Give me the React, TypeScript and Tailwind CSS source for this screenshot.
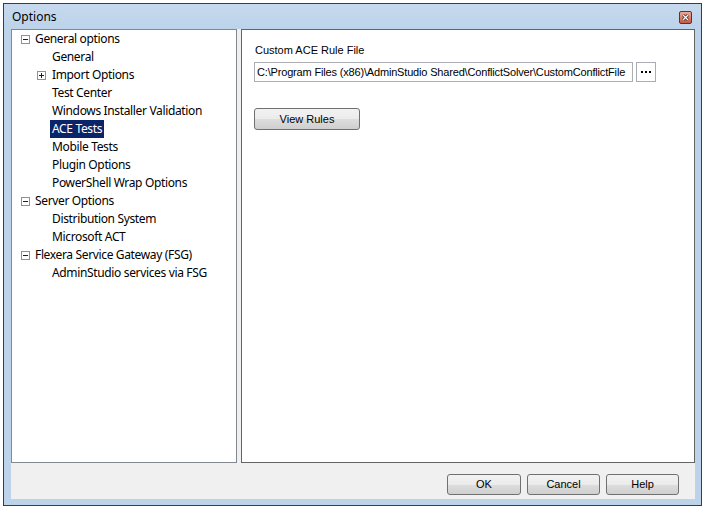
import React from 'react';

const tree = [
  { label: 'General options', level: 0, box: 'minus' },
  { label: 'General', level: 1 },
  { label: 'Import Options', level: 1, box: 'plus' },
  { label: 'Test Center', level: 1 },
  { label: 'Windows Installer Validation', level: 1 },
  { label: 'ACE Tests', level: 1, selected: true },
  { label: 'Mobile Tests', level: 1 },
  { label: 'Plugin Options', level: 1 },
  { label: 'PowerShell Wrap Options', level: 1 },
  { label: 'Server Options', level: 0, box: 'minus' },
  { label: 'Distribution System', level: 1 },
  { label: 'Microsoft ACT', level: 1 },
  { label: 'Flexera Service Gateway (FSG)', level: 0, box: 'minus' },
  { label: 'AdminStudio services via FSG', level: 1 },
];

function Expander({ kind }: { kind: string }) {
  return (
    <span className="relative w-[9px] h-[9px] border border-[#919191] bg-white shrink-0">
      <span className="absolute left-[1px] top-[3px] w-[5px] h-px bg-[#1e1e1e]" />
      {kind === 'plus' && <span className="absolute left-[3px] top-[1px] w-px h-[5px] bg-[#1e1e1e]" />}
    </span>
  );
}

function Btn({ children, className = '' }: { children: React.ReactNode; className?: string }) {
  return (
    <button
      className={`border border-[#707070] rounded-[3px] bg-[linear-gradient(#f2f2f2_0%,#ebebeb_50%,#dddddd_51%,#cfcfcf_100%)] text-[11px] text-black flex items-center justify-center ${className}`}
      style={{ fontFamily: '"Liberation Sans", Arial, sans-serif' }}
    >
      {children}
    </button>
  );
}

export default function App() {
  return (
    <div className="w-[703px] h-[508px] bg-white pl-[3px] pt-[3px]">
      <div className="w-[699px] h-[503px] border border-[#3c3c3c] bg-[#bcd3ea] flex flex-col pl-[7px] pr-[6px] pb-[6px]">
        <div className="h-[25px] flex items-center justify-between shrink-0 -ml-[7px] -mr-[6px] pl-[8px] pr-[9px] bg-[linear-gradient(#c6d9ee,#bcd3ea)]">
          <span className="text-[12px] text-black pt-[1px]" style={{ fontFamily: '"Noto Sans", sans-serif' }}>Options</span>
          <span className="w-[13px] h-[13px] mt-[1px] border border-[#6d2c1e] rounded-[2px] bg-[linear-gradient(#e9ab9c,#c75a43)] flex items-center justify-center">
            <svg width="7" height="7" viewBox="0 0 7 7">
              <path d="M1 1 L6 6 M6 1 L1 6" stroke="#3a1a12" strokeWidth="2.6" />
              <path d="M1 1 L6 6 M6 1 L1 6" stroke="#ffffff" strokeWidth="1.3" />
            </svg>
          </span>
        </div>
        <div className="flex-1 bg-[#f0f0f0] flex flex-col">
          <div className="flex gap-[4px] h-[434px]">
            <div className="w-[226px] border border-[#828790] bg-white text-[12px] text-black" style={{ fontFamily: '"Noto Sans", sans-serif', letterSpacing: '-0.35px' }}>
              {tree.map((t) => (
                <div key={t.label} className={`h-[18px] flex items-center ${t.level === 0 ? 'pl-[9px]' : 'pl-[25px]'}`}>
                  <span className={`${t.level === 0 ? 'w-[12px]' : 'w-[13px]'} flex`}>{t.box && <Expander kind={t.box} />}</span>
                  <span className={`h-[18px] flex items-center px-[2px] ${t.selected ? 'bg-[#0a246a] text-white' : ''}`}>{t.label}</span>
                </div>
              ))}
            </div>
            <div className="flex-1 border border-[#646464] bg-white pl-[12px] pt-[13px] text-[11px] text-black" style={{ fontFamily: '"Liberation Sans", Arial, sans-serif' }}>
              <div className="h-[14px] leading-[14px] pl-[1px]">Custom ACE Rule File</div>
              <div className="flex gap-[2px] mt-[5px] items-center">
                <div className="w-[379px] h-[20px] border border-[#abadb3] bg-white pl-[2px] flex items-center overflow-hidden whitespace-nowrap tracking-[-0.17px]">
                  C:\Program Files (x86)\AdminStudio Shared\ConflictSolver\CustomConflictFile
                </div>
                <div className="w-[20px] h-[20px] ml-[1px] border border-[#abadb3] bg-white flex items-center justify-center">
                  <svg width="10" height="3" viewBox="0 0 10 3">
                    <rect x="0" y="0" width="2" height="2" fill="#000" />
                    <rect x="4" y="0" width="2" height="2" fill="#000" />
                    <rect x="8" y="0" width="2" height="2" fill="#000" />
                  </svg>
                </div>
              </div>
              <Btn className="w-[106px] h-[22px] mt-[26px]">View Rules</Btn>
            </div>
          </div>
          <div className="flex-1 flex justify-end items-start gap-[6px] pr-[16px] pt-[11px]">
            <Btn className="w-[74px] h-[21px]">OK</Btn>
            <Btn className="w-[73px] h-[21px]">Cancel</Btn>
            <Btn className="w-[73px] h-[21px]">Help</Btn>
          </div>
        </div>
      </div>
    </div>
  );
}
